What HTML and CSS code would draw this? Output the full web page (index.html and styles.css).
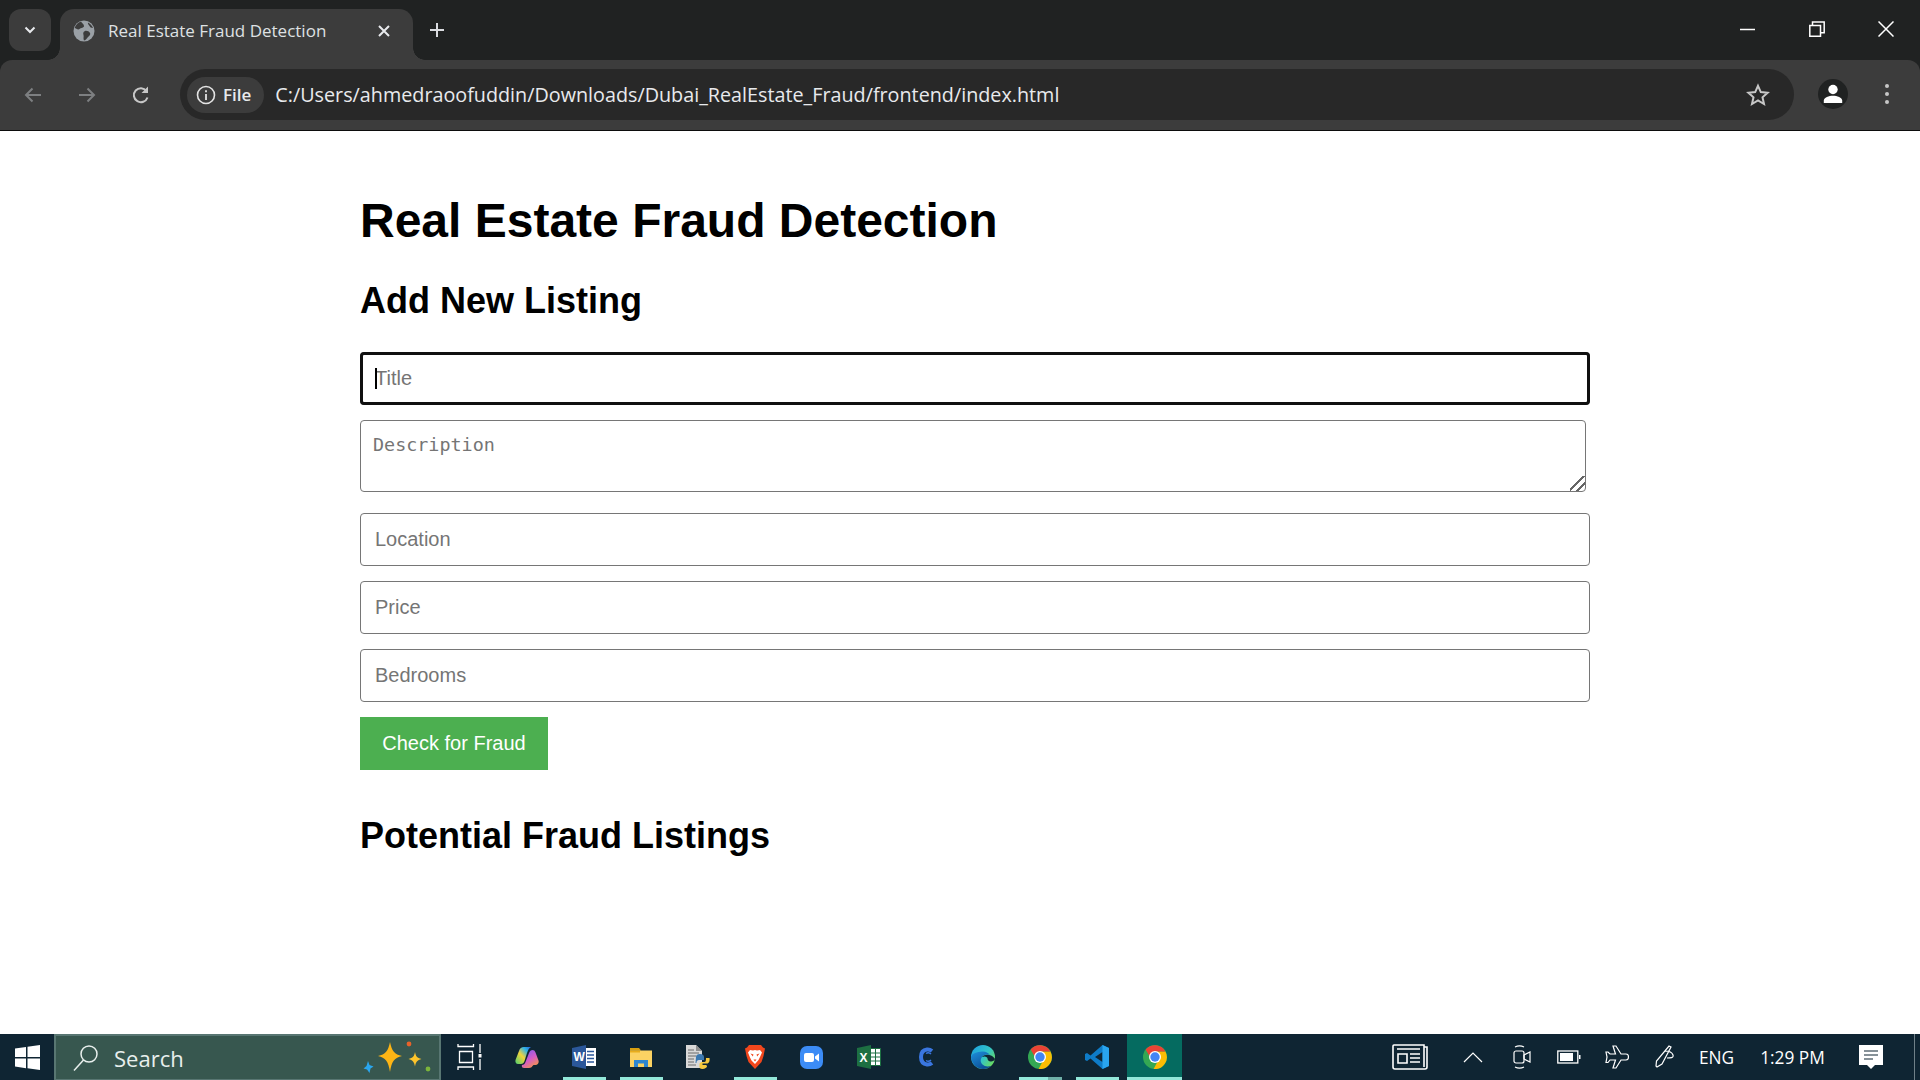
FILE: index.html
```html
<!DOCTYPE html>
<html lang="en">
<head>
    <meta charset="UTF-8">
    <title>Real Estate Fraud Detection</title>
    <link rel="stylesheet" href="styles.css">
</head>

<body>
    <svg class="defs" width="0" height="0">
        <symbol id="chrome-logo" viewBox="0 0 24 24">
            <circle cx="12" cy="12" r="12" fill="#34a853"/>
            <path d="M12 6.400H22.400A12 12 0 0 1 10.600 24L17 12z" fill="#fbbc04"/>
            <path d="M12 6.400H22.400A12 12 0 0 0 2.600 4.500L7 12z" fill="#ea4335"/>
            <circle cx="12" cy="12" r="6" fill="#fff"/>
            <circle cx="12" cy="12" r="4.700" fill="#4285f4"/>
        </symbol>
    </svg>

    <div class="tabstrip">
        <div class="tab-search">
            <svg width="16" height="16" viewBox="0 0 16 16"><path d="M3.500 5.500L8 10l4.500-4.500" fill="none" stroke="#e8eaed" stroke-width="2"/></svg>
        </div>
        <div class="tab">
            <svg class="tab-icon" width="22" height="22" viewBox="0 0 22 22">
                <circle cx="11" cy="11" r="10.500" fill="#9aa0a6"/>
                <path d="M8 1.500c1 2 3 2.500 3 4.500s-3 1.500-4.500 3S3 8 1.500 8C3 4.500 5 2.500 8 1.500zM12 11c2-.5 4 .5 5 2s-1 3-2 4-2 3-4 3.500c-1-2 0-4-.5-5.500S10 11.500 12 11zM15 2.500c2 1 4 3 5 5.500-2 0-3-1-3.500-2s-2-2-1.500-3.500z" fill="#3c3c3c"/>
            </svg>
            <span class="tab-title">Real Estate Fraud Detection</span>
            <svg class="tab-close" width="14" height="14" viewBox="0 0 14 14"><path d="M2 2l10 10M12 2L2 12" stroke="#e8eaed" stroke-width="2"/></svg>
        </div>
        <div class="new-tab">
            <svg width="18" height="18" viewBox="0 0 18 18"><path d="M9 2v14M2 9h14" stroke="#dadce0" stroke-width="2"/></svg>
        </div>
        <div class="window-btns">
            <svg width="16" height="16" viewBox="0 0 16 16"><path d="M0 8.500h15" stroke="#fff" stroke-width="1.500"/></svg>
            <svg width="16" height="16" viewBox="0 0 16 16"><path d="M.8 4.500h10.700v10.700H.8zM3.500 4V1h11.700v10.700h-3.500" fill="none" stroke="#fff" stroke-width="1.500"/></svg>
            <svg width="16" height="16" viewBox="0 0 16 16"><path d="M.5.500l15 15M15.500.500l-15 15" stroke="#fff" stroke-width="1.500"/></svg>
        </div>
    </div>

    <div class="toolbar">
        <div class="nav-btns">
            <svg width="22" height="22" viewBox="0 0 22 22"><path d="M19 11H4M10.500 4.500L4 11l6.500 6.500" fill="none" stroke="#7d7f81" stroke-width="2"/></svg>
            <svg width="22" height="22" viewBox="0 0 22 22"><path d="M3 11h15M11.500 4.500L18 11l-6.500 6.500" fill="none" stroke="#7d7f81" stroke-width="2"/></svg>
            <svg width="22" height="22" viewBox="0 0 22 22"><path d="M17.500 13.500a7 7 0 1 1-1-6.500" fill="none" stroke="#c7c7c7" stroke-width="2"/><path d="M18 2.500V9h-6.500z" fill="#c7c7c7"/></svg>
        </div>
        <div class="omnibox">
            <div class="chip">
                <svg width="20" height="20" viewBox="0 0 20 20"><circle cx="10" cy="10" r="8.500" fill="none" stroke="#e3e3e3" stroke-width="1.600"/><path d="M10 9v6M10 5.200v2" stroke="#e3e3e3" stroke-width="1.800"/></svg>
                <span>File</span>
            </div>
            <span class="url">C:/Users/ahmedraoofuddin/Downloads/Dubai_RealEstate_Fraud/frontend/index.html</span>
            <svg class="star" width="24" height="24" viewBox="0 0 24 24"><path d="M12 2.800l2.800 6.300 6.800.7-5.100 4.500 1.500 6.700-6-3.500-6 3.500 1.500-6.700-5.100-4.500 6.800-.7z" fill="none" stroke="#c7c7c7" stroke-width="2"/></svg>
        </div>
        <div class="avatar">
            <svg width="20" height="20" viewBox="0 0 20 20"><circle cx="10" cy="5.500" r="4.700" fill="#fff"/><path d="M.8 19v-2.500C.8 13.500 6 11.800 10 11.800s9.200 1.700 9.200 4.700V19z" fill="#fff"/></svg>
        </div>
        <div class="menu-dots"><i></i><i></i><i></i></div>
    </div>

    <main class="page">
        <h1>Real Estate Fraud Detection</h1>
        <h2>Add New Listing</h2>
        <form class="listing-form">
            <div class="focused-field">
                <input type="text" placeholder="Title" autofocus>
                <span class="caret"></span>
            </div>
            <textarea placeholder="Description"></textarea>
            <input type="text" placeholder="Location">
            <input type="text" placeholder="Price">
            <input type="text" placeholder="Bedrooms">
            <button type="button">Check for Fraud</button>
        </form>
        <h2 class="fraud-title">Potential Fraud Listings</h2>
    </main>

    <div class="taskbar">
        <div class="start">
            <svg width="25" height="25" viewBox="0 0 25 25"><path d="M0 3.600l11-1.600v10H0zM12.500 1.800L25 0v12H12.500zM0 13.500h11v9.700L0 21.500zM12.500 13.500H25V25l-12.500-1.800z" fill="#fff"/></svg>
        </div>
        <div class="search">
            <svg width="28" height="28" viewBox="0 0 28 28"><circle cx="17" cy="10" r="8" fill="none" stroke="#e8efed" stroke-width="1.500"/><path d="M11.500 16L2 26.500" stroke="#e8efed" stroke-width="1.500"/></svg>
            <span>Search</span>
            <svg class="sparkles" width="70" height="36" viewBox="0 0 70 36">
                <path d="M27 2c1.800 9 4.500 12.500 12 14-7.500 1.700-10.200 5-12 16-1.800-11-4.500-14.300-12-16 7.500-1.500 10.200-5 12-14z" fill="#fdb515"/>
                <path d="M52 12c.8 4.500 2.200 6 6.500 7-4.300 1.200-5.700 2.800-6.500 7.500-.8-4.700-2.200-6.300-6.500-7.500 4.300-1 5.700-2.500 6.500-7z" fill="#fdc42c"/>
                <path d="M5 21l1.500 4 4 1.500-3 2-1 4.500-2.500-3.500-3.500-1 3-2.500z" fill="#2aa6ee"/>
                <circle cx="46" cy="4" r="2.400" fill="#e8622a"/>
                <circle cx="65" cy="29" r="2.400" fill="#7cb53b"/>
            </svg>
        </div>
        <div class="apps">
            <div class="app">
                <svg width="26" height="28" viewBox="0 0 26 28" fill="none" stroke="#fff" stroke-width="1.300"><path d="M1 1v2.500h15.500V1M2.500 8.500h13v11h-13zM1 27v-3h15.500v3M23 1v9M23 16v11"/><rect x="21.500" y="11" width="3" height="3.500" fill="#fff" stroke="none"/></svg>
            </div>
            <div class="app">
                <svg width="24" height="24" viewBox="0 0 24 24">
                    <defs>
                        <linearGradient id="cop-a" x1="0" y1="1" x2="1" y2="0"><stop offset="0" stop-color="#4ccf6e"/><stop offset=".45" stop-color="#f2d33c"/><stop offset=".75" stop-color="#2fb4e8"/><stop offset="1" stop-color="#2460d8"/></linearGradient>
                        <linearGradient id="cop-b" x1=".2" y1="0" x2=".8" y2="1"><stop offset="0" stop-color="#7a5cf0"/><stop offset=".5" stop-color="#d45bc8"/><stop offset="1" stop-color="#f99a3c"/></linearGradient>
                    </defs>
                    <path d="M9 2h7c-2 1-3 3-4 6l-2.500 8c-.5 2-2 3-3.500 3H3c-2 0-3-2-2.500-4L4 6c.7-2.500 2.500-4 5-4z" fill="url(#cop-a)"/>
                    <path d="M14 8c.8-2 2-3 3.500-3 1.300 0 2.500.8 3 2.500l3 8c.7 2.500-.8 4.500-3 4.500h-2l-1 1c-.5 1-2 2-3.500 2H9c-2 0-2.500-1.500-2-3 1.500 0 3-1 3.500-3z" fill="url(#cop-b)"/>
                </svg>
            </div>
            <div class="app running">
                <svg width="24" height="24" viewBox="0 0 24 24"><rect x="9" y="3" width="15" height="18" fill="#fff"/><path d="M15 6.500h7M15 10h7M15 13.500h7M15 17h7" stroke="#2b579a" stroke-width="1.300"/><path d="M0 3L14 0v24L0 21z" fill="#2b579a"/><text x="1.500" y="16" class="app-letter">W</text></svg>
            </div>
            <div class="app running">
                <svg width="22" height="19" viewBox="0 0 22 19"><path d="M0 0h9l2 2.500h-11z" fill="#d79f10"/><rect y="2.500" width="22" height="16.500" fill="#fbd263"/><rect y="2.500" width="10" height="2" fill="#e8ad1c"/><path d="M4 19v-7h14v7h-4v-3.500H8V19z" fill="#2e86d0"/></svg>
            </div>
            <div class="app">
                <svg width="24" height="24" viewBox="0 0 24 24"><path d="M0 0h10l6 6v17H0z" fill="#d9d9d9"/><path d="M10 0l6 6h-6z" fill="#8f8f8f"/><path d="M2 5h6M2 8h11M2 11h8M2 14h6M2 17h6M2 20h8" stroke="#6a6a6a" stroke-width="1"/><path d="M10 12c0-2 1.500-3 4-3s4 1 4 3v3h-5c-1.500 0-2.500 1-2.500 2.500V18H9.500z" fill="#3b78b0"/><path d="M23.500 13c.5 3-.5 5.500-2.500 5.500h-4.500V20h3c1 0 1.500 .7 1.500 1.500S19 24 16.500 24s-3-1-3-2.500v-2c0-1.500 1-2.500 2.500-2.500h2.500c1 0 1.500-1 1.500-4z" fill="#f7c93e"/></svg>
            </div>
            <div class="app running">
                <svg width="20" height="24" viewBox="0 0 20 24"><path d="M4 0h12l2 2.500 2 1-1.500 7.500-2 6L10 24l-6.500-7-2-6L0 3.500l2-1z" fill="#f1471d"/><path d="M5 5l3 .5L10 5l2 .5 3-.5 2 2.500-2 4.500-1.500 3L10 19l-3.500-3.500L5 12.500 3 7.500z" fill="#fff"/><path d="M5.500 8.500l3 1-.7 2zM14.500 8.500l-3 1 .7 2zM8.500 14.500h3L10 16.500z" fill="#f1471d"/></svg>
            </div>
            <div class="app">
                <svg width="23" height="23" viewBox="0 0 23 23"><rect width="23" height="23" rx="7" fill="#3c8cf6"/><rect x="4" y="7" width="10" height="9" rx="2" fill="#fff"/><path d="M15 10.500l4-3v8l-4-3z" fill="#fff"/></svg>
            </div>
            <div class="app">
                <svg width="24" height="24" viewBox="0 0 24 24"><path d="M0 3L14 0v24L0 21z" fill="#1d6f42"/><rect x="13" y="3" width="11" height="18" fill="#1d6f42"/><rect x="14" y="4" width="9" height="16" fill="#fff"/><path d="M14 8h9M14 12h9M14 16h9M18.500 4v16" stroke="#1d6f42" stroke-width="1"/><text x="2.500" y="16.500" class="app-letter">X</text></svg>
            </div>
            <div class="app">
                <svg width="16" height="20" viewBox="0 0 16 20"><path d="M14 4C12.500 2.800 11 2.300 9 2.500 5 3 3 6 3 10s2 7 6 7.500c2 .2 3.500-.3 5-1.500" fill="none" stroke="#3a76e0" stroke-width="4"/><path d="M8 6.500c1.500-1 3.500-1 5 .5M8 13.500c1.500 1 3.500 1 5-.5" fill="none" stroke="#3a76e0" stroke-width="1.500"/></svg>
            </div>
            <div class="app">
                <svg width="24" height="24" viewBox="0 0 24 24">
                    <defs>
                        <linearGradient id="edge-a" x1="0" y1="0" x2="1" y2=".7"><stop offset="0" stop-color="#1b9de2"/><stop offset=".6" stop-color="#32c4c8"/><stop offset="1" stop-color="#6bdb5c"/></linearGradient>
                        <linearGradient id="edge-b" x1="0" y1="0" x2=".6" y2="1"><stop offset="0" stop-color="#1e90dc"/><stop offset="1" stop-color="#0c4f96"/></linearGradient>
                    </defs>
                    <circle cx="12" cy="12" r="12" fill="url(#edge-a)"/>
                    <path d="M0 12c.5 7 6 12 12 12 3.500 0 6-1 8-3-3.500 1-6.500.5-8.500-1.500s-2.500-5-.5-7.500 5-3 8-2c-2-2.500-5-4-8-3.500C6 7 1 8 0 12z" fill="url(#edge-b)"/>
                    <path d="M11 12c2-2.500 6-3 9-1.500 2 1 3.500 2.500 4 3.500-.5 1.500-2 2.500-4 2.500-2.500 0-3.500-1.500-3.500-3s-2.500-3-5.500-1.500z" fill="#0f2533"/>
                </svg>
            </div>
            <div class="app running stacked">
                <svg width="24" height="24"><use href="#chrome-logo"/></svg>
            </div>
            <div class="app running">
                <svg width="24" height="24" viewBox="0 0 24 24"><path d="M17.500 0L5.500 10.500 2 8 0 9v6l2 1 3.500-2.500L17.500 24 24 21V3zM17.500 7v10L10 12z" fill="#0e7cc8"/><path d="M17.500 0L24 3v18l-6.500 3z" fill="#29a5ef"/></svg>
            </div>
            <div class="app running active">
                <svg width="24" height="24"><use href="#chrome-logo"/></svg>
            </div>
        </div>
        <div class="tray">
            <svg class="tray-news" width="36" height="26" viewBox="0 0 36 26" fill="none" stroke="#fff" stroke-width="1.600"><path d="M32 3V1H2a1 1 0 0 0-1 1v21c0 1 1 2 2 2h30c1 0 2-1 2-2V3zM32 3v20"/><path d="M5 5h23M6 10h9v9H6zM18 10h10M18 14h10M18 18h10"/></svg>
            <svg class="tray-caret" width="20" height="12" viewBox="0 0 20 12"><path d="M1 11l9-9 9 9" fill="none" stroke="#fff" stroke-width="1.200"/></svg>
            <svg class="tray-meet" width="18" height="26" viewBox="0 0 18 26" fill="none" stroke="#fff" stroke-width="1.200"><rect x="1" y="7" width="10" height="12" rx="2"/><path d="M11 11l6-3v10l-6-3zM2 3c3-1.500 6-1.500 9 0M2 23c3 1.500 6 1.500 9 0"/></svg>
            <svg class="tray-battery" width="24" height="14" viewBox="0 0 24 14"><rect x=".8" y="1" width="20" height="12" fill="none" stroke="#fff" stroke-width="1.300"/><rect x="3" y="3" width="13" height="8" fill="#fff"/><rect x="22" y="5" width="1.500" height="4" fill="#fff"/></svg>
            <svg class="tray-plane" width="24" height="24" viewBox="0 0 24 24"><path d="M8 1h3l5 8h5c2 0 2.500 2 2.500 3S23 15 21 15h-5l-5 8H8l2.500-8H5l-2 2.500H1l1-5.500-1-5h2L5 9h5.500z" fill="none" stroke="#fff" stroke-width="1.200"/></svg>
            <svg class="tray-pen" width="22" height="24" viewBox="0 0 22 24"><path d="M16 1l2 1-9 17-5 3-1-1 .5-5zM12 6c3 0 7 1 8 4s-3 3-6 3" fill="none" stroke="#fff" stroke-width="1.200"/></svg>
            <span class="tray-lang">ENG</span>
            <span class="tray-time">1:29 PM</span>
            <svg class="tray-notify" width="24" height="25" viewBox="0 0 24 25"><path d="M0 0h24v20h-8l-4 4-4-4H0z" fill="#fff"/><path d="M5 6h14M5 10h14M5 14h9" stroke="#0f2533" stroke-width="1.200"/></svg>
            <div class="show-desktop"></div>
        </div>
    </div>
</body>

</html>
```

FILE: styles.css
```css
* {
    box-sizing: border-box;
    margin: 0;
    padding: 0;
}

html, body {
    height: 100%;
}

body {
    display: flex;
    flex-direction: column;
    width: 1920px;
    height: 1080px;
    overflow: hidden;
    background: #202222;
    font-family: "Liberation Sans", Arial, sans-serif;
}

.defs {
    position: absolute;
}

/* browser tabs */
.tabstrip {
    display: flex;
    flex: 0 0 60px;
    align-items: flex-start;
    padding: 9px 0 0 9px;
    background: #202222;
}

.tab-search {
    display: flex;
    align-items: center;
    justify-content: center;
    width: 42px;
    height: 42px;
    border-radius: 12px;
    background: #3c3c3c;
}

.tab {
    position: relative;
    display: flex;
    align-items: center;
    width: 353px;
    height: 51px;
    margin-left: 9px;
    padding: 0 22px 8px 13px;
    border-radius: 14px 14px 0 0;
    background: #3c3c3c;
}

.tab::before,
.tab::after {
    content: '';
    position: absolute;
    bottom: 0;
    width: 12px;
    height: 12px;
}

.tab::before {
    left: -12px;
    background: radial-gradient(circle at 0 0, #202222 11.500px, #3c3c3c 12px);
}

.tab::after {
    right: -12px;
    background: radial-gradient(circle at 100% 0, #202222 11.500px, #3c3c3c 12px);
}

.tab-title {
    margin-left: 13px;
    color: #dfe1e3;
    font-family: "Open Sans", sans-serif;
    font-size: 17px;
    white-space: nowrap;
}

.tab-close {
    margin-left: auto;
}

.new-tab {
    display: flex;
    align-items: center;
    justify-content: center;
    width: 42px;
    height: 42px;
    margin-left: 3px;
}

.window-btns {
    display: flex;
    gap: 53px;
    margin: 12px 26px 0 auto;
}

/* address bar */
.toolbar {
    display: flex;
    flex: 0 0 71px;
    align-items: flex-start;
    padding-top: 9px;
    border-bottom: 1px solid #0c0c0c;
    border-radius: 12px 12px 0 0;
    background: #3c3c3c;
}

.nav-btns {
    display: flex;
    gap: 32px;
    width: 180px;
    padding: 15px 0 0 22px;
}

.omnibox {
    display: flex;
    align-items: center;
    width: 1614px;
    height: 51px;
    padding: 0 24px 0 7px;
    border-radius: 26px;
    background: #282828;
}

.chip {
    display: flex;
    align-items: center;
    gap: 7px;
    height: 36px;
    padding: 0 13px 0 9px;
    border-radius: 18px;
    background: #3c3c3c;
    color: #e8eaed;
    font-family: "Open Sans", sans-serif;
    font-size: 17px;
    font-weight: 600;
}

.url {
    margin-left: 11px;
    color: #e8eaed;
    font-family: "Open Sans", sans-serif;
    font-size: 19.750px;
    white-space: nowrap;
}

.star {
    margin-left: auto;
}

.avatar {
    display: flex;
    align-items: center;
    justify-content: center;
    width: 30px;
    height: 30px;
    margin: 10px 0 0 24px;
    border-radius: 50%;
    background: #202222;
}

.menu-dots {
    display: flex;
    flex-direction: column;
    gap: 4px;
    margin: 15px 0 0 37px;
}

.menu-dots i {
    display: block;
    width: 4px;
    height: 4px;
    border-radius: 50%;
    background: #c7c7c7;
}

/* page content */
.page {
    flex: 1;
    padding: 61px 330px 0 360px;
    background: #fff;
    color: #000;
}

h1 {
    font-size: 48px;
    line-height: 57px;
}

h2 {
    margin-top: 31px;
    font-size: 36px;
    line-height: 42px;
}

.listing-form {
    display: flex;
    flex-direction: column;
    align-items: flex-start;
    gap: 15px;
    margin-top: 30px;
}

.listing-form input {
    width: 100%;
    height: 53px;
    padding: 0 14px;
    border: 1.250px solid #767676;
    border-radius: 4px;
    color: #000;
    font-family: "Liberation Sans", Arial, sans-serif;
    font-size: 20px;
}

.focused-field {
    position: relative;
    width: 100%;
}

.listing-form input:focus {
    outline: 3px solid #101010;
    outline-offset: -3px;
    caret-color: transparent;
}

.caret {
    position: absolute;
    left: 15px;
    top: 16px;
    width: 2px;
    height: 21px;
    background: #000;
}

.listing-form textarea {
    width: 1226px;
    height: 72px;
    margin-bottom: 6px;
    padding: 13px 12px;
    border: 1.250px solid #767676;
    border-radius: 4px;
    font-family: "DejaVu Sans Mono", monospace;
    font-size: 18.400px;
    line-height: 21px;
}

.listing-form textarea::-webkit-resizer {
    background: linear-gradient(135deg, transparent 42%, #666 42%, #666 52%, transparent 52%, transparent 68%, #666 68%, #666 78%, transparent 78%);
}

::placeholder {
    color: #757575;
    opacity: 1;
}

.listing-form button {
    width: 188px;
    height: 53px;
    border: 0;
    background: #4caf50;
    color: #fff;
    font-family: "Liberation Sans", Arial, sans-serif;
    font-size: 20px;
}

h2.fraud-title {
    margin-top: 45px;
}

/* windows taskbar */
.taskbar {
    display: flex;
    flex: 0 0 46px;
    align-items: center;
    background: #0f2533;
}

.start {
    display: flex;
    flex: 0 0 54px;
    align-items: center;
    justify-content: center;
}

.search {
    display: flex;
    flex: 0 0 387px;
    align-items: center;
    height: 46px;
    padding: 0 6px 0 16px;
    border: 2px solid #587672;
    border-bottom-width: 1px;
    background: #37574f;
    color: #e8efed;
    font-family: "Open Sans", sans-serif;
    font-size: 22px;
}

.search span {
    margin-left: 14px;
}

.sparkles {
    margin-left: auto;
}

.apps {
    display: flex;
    height: 46px;
}

.app {
    position: relative;
    display: flex;
    align-items: center;
    justify-content: center;
    width: 57px;
}

.app.running::after {
    content: '';
    position: absolute;
    left: 8px;
    right: 6px;
    bottom: 0;
    height: 3px;
    background: #93e8da;
}

.app.stacked::after {
    background: linear-gradient(to right, #93e8da 29px, #6fb0a8 29px);
}

.app.active {
    width: 55px;
    margin-left: 2px;
    background: #056b60;
}

.app.active::after {
    left: 0;
    right: 0;
}

.app-letter {
    fill: #fff;
    font-family: "Liberation Sans", Arial, sans-serif;
    font-size: 12px;
    font-weight: bold;
}

.tray {
    display: flex;
    flex: 1;
    align-items: center;
    color: #fff;
    font-family: "Open Sans", sans-serif;
    font-size: 17.300px;
}

.tray-news {
    margin-left: 210px;
}

.tray-caret {
    margin-left: 35px;
}

.tray-meet {
    margin-left: 30px;
}

.tray-battery {
    margin-left: 26px;
}

.tray-plane {
    margin-left: 24px;
}

.tray-pen {
    margin-left: 24px;
}

.tray-lang {
    margin-left: 24px;
}

.tray-time {
    margin-left: 26px;
}

.tray-notify {
    margin-left: 34px;
}

.show-desktop {
    width: 1px;
    height: 46px;
    margin-left: 31px;
    background: #6f8088;
}
```
